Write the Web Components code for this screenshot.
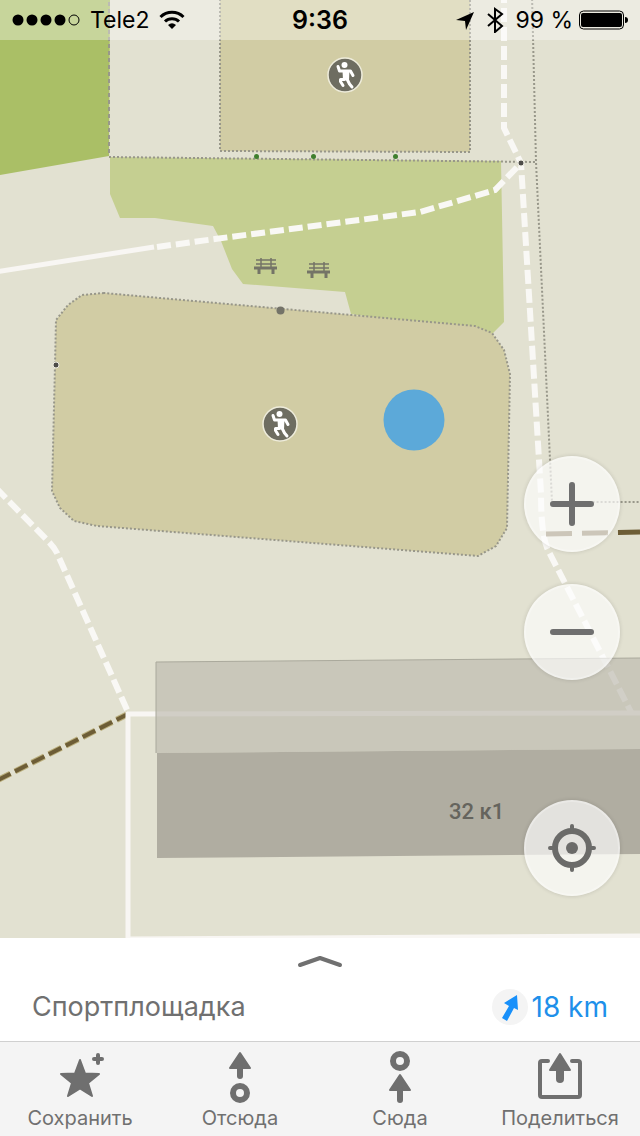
<!DOCTYPE html>
<html lang="ru">
<head>
<meta charset="utf-8">
<meta name="viewport" content="width=device-width, initial-scale=1">
<title>Спортплощадка</title>
<style>
  body {
    margin: 0;
    font-family: Inter, "Liberation Sans", sans-serif;
    color: #707070;
    background: #fff;
  }
</style>
</head>
<body>
<map-app>
  <status-bar slot="status" carrier="Tele2" time="9:36" battery="99 %"></status-bar>
  <city-map slot="map"></city-map>
  <map-control slot="controls" label="Приблизить">
    <svg width="48" height="48" fill="none" stroke="#6f6f6f" stroke-width="6" stroke-linecap="round"><path d="M24 5v38M5 24h38"/></svg>
  </map-control>
  <map-control slot="controls" label="Отдалить">
    <svg width="48" height="48" fill="none" stroke="#6f6f6f" stroke-width="6" stroke-linecap="round"><path d="M5 24h38"/></svg>
  </map-control>
  <map-control slot="locate" label="Моё местоположение">
    <svg width="48" height="48" fill="none" stroke="#6b6b69" stroke-width="4" stroke-linecap="round">
      <circle cx="24" cy="24" r="17" stroke-width="6"/>
      <circle cx="24" cy="24" r="6" fill="#6b6b69" stroke="none"/>
      <path d="M24 2v4M24 42v4M2 24h4M42 24h4"/>
    </svg>
  </map-control>
  <place-card slot="panel" distance="18 km">Спортплощадка</place-card>
  <tool-bar slot="panel">
    <tool-button>
      <svg slot="icon" width="64" height="54" fill="#6f6f6f" stroke="#6f6f6f" stroke-width="2" stroke-linejoin="round">
        <path d="M32 10l5 13.500 14 .5-11 9 4 13-12-7.500-12 7.500 4-13-11-9 14-.5z"/>
        <path d="M50 5v8M46 9h8" stroke-width="4" stroke-linecap="round"/>
      </svg>
      Сохранить
    </tool-button>
    <tool-button>
      <svg slot="icon" width="64" height="54" fill="#6f6f6f" stroke="#6f6f6f" stroke-linejoin="round" stroke-linecap="round">
        <path d="M32 3l10 15H22z" stroke-width="2"/>
        <path d="M32 18v8" stroke-width="6"/>
        <circle cx="32" cy="43" r="7" fill="none" stroke-width="6"/>
      </svg>
      Отсюда
    </tool-button>
    <tool-button>
      <svg slot="icon" width="64" height="54" fill="#6f6f6f" stroke="#6f6f6f" stroke-linejoin="round" stroke-linecap="round">
        <circle cx="32" cy="11" r="7" fill="none" stroke-width="6"/>
        <path d="M32 25l10 15H22z" stroke-width="2"/>
        <path d="M32 40v10" stroke-width="6"/>
      </svg>
      Сюда
    </tool-button>
    <tool-button>
      <svg slot="icon" width="64" height="54" fill="#6f6f6f" stroke="#6f6f6f" stroke-linejoin="round" stroke-linecap="round">
        <path d="M20 11h-6q-2 0-2 2v32q0 2 2 2h36q2 0 2-2V13q0-2-2-2h-6" fill="none" stroke-width="4"/>
        <path d="M32 4l10 16H22z" stroke-width="2"/>
        <path d="M32 20v9" stroke-width="8"/>
      </svg>
      Поделиться
    </tool-button>
  </tool-bar>
</map-app>

<script>
class BaseElement extends HTMLElement {
  constructor() {
    super();
    this.attachShadow({ mode: "open" });
  }
  connectedCallback() {
    this.shadowRoot.innerHTML = `<style>${this.constructor.styles}</style>${this.render()}`;
  }
  render() {
    return "<slot></slot>";
  }
}

class MapApp extends BaseElement {
  static styles = `
    :host { display: flex; flex-direction: column; min-height: 100vh; }
    main { position: relative; flex: 1; display: flex; flex-direction: column; min-height: 520px; overflow: hidden; }
    .status { position: absolute; top: 0; left: 0; right: 0; }
    .controls {
      position: absolute; right: 20px; bottom: 42px;
      display: flex; flex-direction: column; gap: 32px;
    }
    .locate { margin-top: 88px; }
  `;
  render() {
    return `
      <main>
        <slot name="map"></slot>
        <div class="status"><slot name="status"></slot></div>
        <div class="controls">
          <slot name="controls"></slot>
          <div class="locate"><slot name="locate"></slot></div>
        </div>
      </main>
      <slot name="panel"></slot>
    `;
  }
}

class StatusBar extends BaseElement {
  static styles = `
    :host {
      display: grid; grid-template-columns: 1fr auto 1fr; align-items: center;
      height: 40px; padding: 0 12px; box-sizing: border-box;
      background: rgba(255, 255, 255, .35);
      color: #000; font-size: 23px; line-height: 40px;
    }
    div { display: flex; align-items: center; gap: 10px; white-space: nowrap; }
    .right { justify-content: flex-end; }
    .battery { gap: 6px; }
    b { font-size: 25px; font-weight: 600; }
    svg { flex: none; }
  `;
  render() {
    return `
      <div>
        <svg width="68" height="14">
          <circle cx="6" cy="7" r="5.500"/><circle cx="20" cy="7" r="5.500"/>
          <circle cx="34" cy="7" r="5.500"/><circle cx="48" cy="7" r="5.500"/>
          <circle cx="62" cy="7" r="5" fill="none" stroke="#000"/>
        </svg>
        <span>${this.getAttribute("carrier")}</span>
        <svg width="26" height="20" viewBox="0 0 26 20" fill="none" stroke="#000" stroke-width="3">
          <path d="M1.500 7a16.500 16.500 0 0 1 23 0M6 11.500a10 10 0 0 1 14 0"/>
          <path d="M13 19l-4-4q4-3.500 8 0z" fill="#000" stroke="none"/>
        </svg>
      </div>
      <b>${this.getAttribute("time")}</b>
      <div class="right">
        <svg width="20" height="20"><path d="M19 2L1 10l9 1 1 9z"/></svg>
        <svg width="20" height="26" fill="none" stroke="#000" stroke-width="2"><path d="M3 7l14 12-7 6V2l7 5L3 19"/></svg>
        <div class="battery">
          <span>${this.getAttribute("battery")}</span>
          <svg width="49" height="20">
            <rect x=".5" y="1" width="44" height="18" rx="4" fill="none" stroke="#000"/>
            <rect x="2" y="3" width="41" height="14" rx="2"/>
            <path d="M46 7q3 0 3 3t-3 3z"/>
          </svg>
        </div>
      </div>
    `;
  }
}

class CityMap extends BaseElement {
  static styles = `
    :host { position: relative; display: block; flex: 1; background: #e2e1d1; }
    svg { position: absolute; inset: 0; width: 100%; height: 100%; }
    .fence { fill: none; stroke: #98978a; stroke-width: 2; stroke-dasharray: 2 2; }
    .fence.wide { stroke-dasharray: 4 3; }
    .path { fill: none; stroke: #f9f8f5; stroke-width: 6; stroke-dasharray: 14 5; }
    .road { fill: none; stroke: #f8f6f3; stroke-width: 5; }
    .track { fill: none; stroke: #6d5d36; }
    text { font: 500 22px Roboto, sans-serif; fill: #65645d; }
  `;
  render() {
    return `
      <svg viewBox="0 0 640 938" preserveAspectRatio="xMidYMid slice">
        <defs>
          <g id="sport">
            <circle r="17" fill="#6e6d61" stroke="#eeecdb" stroke-width="1.500"/>
            <circle cx="-.5" cy="-10" r="3" fill="#fff"/>
            <g fill="none" stroke="#fff" stroke-width="3" stroke-linecap="round" stroke-linejoin="round">
              <path d="M-7-8.500l1.500 4.500H5.500L8 .5"/>
              <path d="M-1 4.500h-3.500v2L-2 10.500M2.500 5l2 4 2.500 3"/>
            </g>
            <path d="M-2.500-5h7l-.5 10.500h-6z" fill="#fff"/>
          </g>
          <g id="table" fill="none" stroke="#747467" stroke-width="1.500">
            <path d="M-10-6h20M-10-2h20M-5-8v9M5-8v9"/>
            <path d="M-12 2h23" stroke-width="3"/>
            <path d="M-7 3v5M7 3v5" stroke-width="3"/>
          </g>
        </defs>

        <path d="M0 0h110l-1 156L0 175z" fill="#aabf66"/>
        <path d="M110 157l391 4 3 161-14 14-139-22-6-22-25-2-77-6-11-15-11-28-8-15-58-8h-35l-10-24z" fill="#c5cf91"/>
        <path d="M220-5v156l250 1V-5z" fill="#d1cca4"/>
        <path class="fence" d="M220-5v156l250 1V-5"/>
        <path class="fence wide" d="M109-5v161"/>
        <path class="fence" d="M109 157l428 5"/>
        <path class="fence" d="M532-5l4 167 16 340h88"/>

        <path class="road" d="M-5 272l159-25"/>
        <path class="path" d="M157 247l58-8 205-27 75-22 26-27"/>
        <path class="path" d="M504-8v136l17 35 20 330q0 43 7 57l83 162" stroke-dashoffset="3"/>
        <path class="path" d="M-4 488l52 53q6 6 9 12l71 159"/>

        <path d="M104 293l-22 2-14 10-12 15-1 45-3 126 8 17 14 13 23 5 381 30 18-10 11-18 3-154-6-24-12-17-17-7z" fill="#d1cca4"/>
        <path class="fence" d="M104 293l-22 2-14 10-12 15-1 45-3 126 8 17 14 13 23 5 381 30 18-10 11-18 3-154-6-24-12-17-17-7z"/>

        <path d="M-2 780l130-66" fill="none" stroke="#b9ad7b" stroke-width="6" stroke-dasharray="14 5"/>
        <path class="track" d="M-2 780l130-66" stroke-width="4" stroke-dasharray="14 5"/>
        <path class="track" d="M546 534l94-2" stroke-width="5" stroke-dasharray="26 10"/>
        <path class="road" d="M128 938V714l512-1M128 939l512-3"/>

        <path d="M156 662l484-4v91l-484 4z" fill="#bbb8ad" fill-opacity=".65"/>
        <path d="M640 658l-484 4v91" fill="none" stroke="#aaa99c"/>
        <path d="M157 753l483-4v105l-483 4z" fill="#b0ada1"/>
        <text x="449" y="819">32 к1</text>

        <g fill="#3f7f2e"><circle cx="256.500" cy="156.500" r="2.500"/><circle cx="313.500" cy="156.500" r="2.500"/><circle cx="395.500" cy="156.500" r="2.500"/></g>
        <g fill="#4d4c49" stroke="#eeece2"><circle cx="521" cy="163" r="3"/><circle cx="56" cy="365" r="3"/></g>
        <circle cx="280.500" cy="310.500" r="4" fill="#747368"/>
        <use href="#table" x="266" y="266"/>
        <use href="#table" x="319" y="270"/>
        <use href="#sport" x="345" y="75"/>
        <use href="#sport" x="280" y="424"/>
        <circle cx="414" cy="420" r="30.500" fill="#5ca9d9"/>
      </svg>
    `;
  }
}

class MapControl extends BaseElement {
  static styles = `
    :host { display: block; }
    button {
      display: flex; align-items: center; justify-content: center;
      width: 96px; height: 96px; padding: 0; box-sizing: border-box;
      border: 2px solid rgba(255, 255, 255, .25); border-radius: 50%;
      background: rgba(254, 253, 254, .66);
      box-shadow: 0 0 4px rgba(0, 0, 0, .14);
      cursor: pointer;
    }
  `;
  render() {
    return `<button aria-label="${this.getAttribute("label")}"><slot></slot></button>`;
  }
}

class PlaceCard extends BaseElement {
  static styles = `
    :host { display: block; background: #fff; padding-bottom: 4px; }
    button { font: inherit; border: 0; background: none; padding: 0; cursor: pointer; }
    .expand { display: flex; justify-content: center; align-items: center; width: 100%; height: 39px; padding-top: 6px; }
    .row {
      display: flex; align-items: center; justify-content: space-between;
      height: 60px; padding: 0 32px; font-size: 27px; line-height: 36px;
    }
    h1 { margin: 0; font: inherit; }
    .distance { display: flex; align-items: center; gap: 4px; font-size: 28px; color: #1e90ea; }
  `;
  render() {
    return `
      <button class="expand" aria-label="Подробнее">
        <svg width="46" height="14" fill="none" stroke="#707070" stroke-width="4" stroke-linecap="round" stroke-linejoin="round"><path d="M3 11l20-7 20 7"/></svg>
      </button>
      <div class="row">
        <h1><slot></slot></h1>
        <button class="distance">
          <svg width="36" height="36">
            <circle cx="18" cy="18" r="18" fill="#f4f4f4"/>
            <path d="M25 6l1 15-4-2-7 13-5-3 7-12-5-3z" fill="#1890fa"/>
          </svg>
          ${this.getAttribute("distance")}
        </button>
      </div>
    `;
  }
}

class ToolBar extends BaseElement {
  static styles = `
    :host { display: flex; background: #f4f4f4; border-top: 1px solid #d0d0d0; }
    ::slotted(*) { flex: 1 1 0; min-width: 0; }
  `;
}

class ToolButton extends BaseElement {
  static styles = `
    :host { display: block; }
    button {
      display: flex; flex-direction: column; align-items: center;
      width: 100%; padding: 8px 0 4px; border: 0; background: none;
      font: inherit; font-size: 20px; line-height: 28px; color: inherit;
      cursor: pointer;
    }
  `;
  render() {
    return `<button><slot name="icon"></slot><span><slot></slot></span></button>`;
  }
}

customElements.define("map-app", MapApp);
customElements.define("status-bar", StatusBar);
customElements.define("city-map", CityMap);
customElements.define("map-control", MapControl);
customElements.define("place-card", PlaceCard);
customElements.define("tool-bar", ToolBar);
customElements.define("tool-button", ToolButton);
</script>
</body>
</html>
